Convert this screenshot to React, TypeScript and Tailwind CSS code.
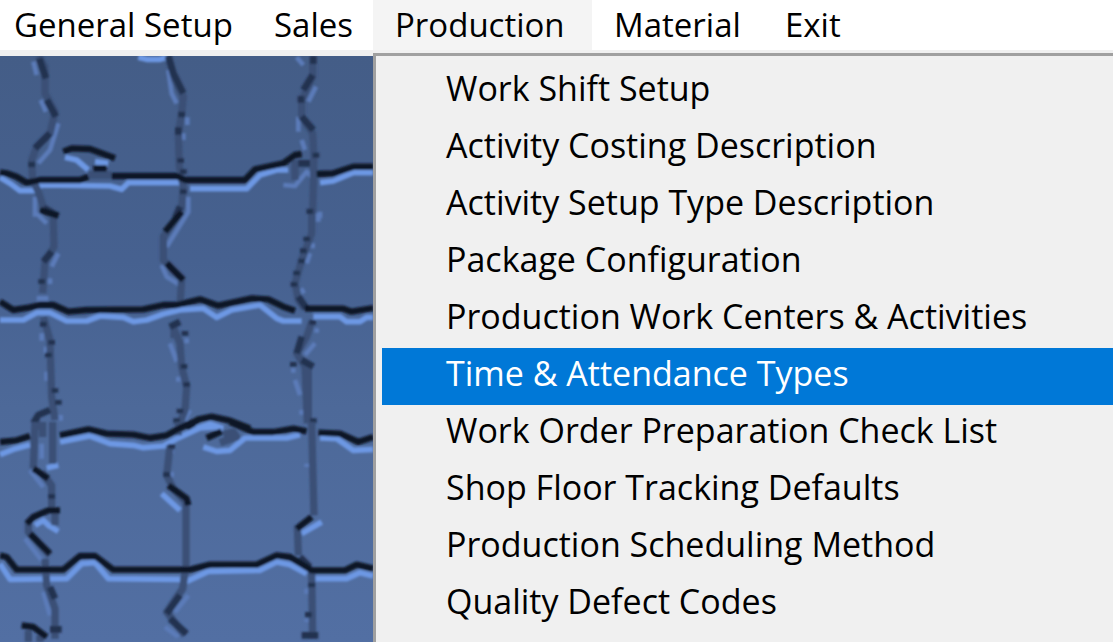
import { useState } from "react";
import clsx from "clsx";

const menus = [
  { label: "General Setup", width: "w-[260px] -ml-2" },
  { label: "Sales", width: "w-[121px]" },
  { label: "Production", width: "w-[219px]" },
  { label: "Material", width: "w-[171px]" },
  { label: "Exit", width: "w-[99px]" },
];

const productionItems = [
  "Work Shift Setup",
  "Activity Costing Description",
  "Activity Setup Type Description",
  "Package Configuration",
  "Production Work Centers & Activities",
  "Time & Attendance Types",
  "Work Order Preparation Check List",
  "Shop Floor Tracking Defaults",
  "Production Scheduling Method",
  "Quality Defect Codes",
];

// each band of the stone wall: joints (soft), knots (darker), shadows and lit edges
const bands = [
  {
    offset: "translate(0 0)",
    joints:
      "M115 168L135 200V280L165 335L150 400L110 440L95 480L98 540L115 575L130 620L160 640 M505 168L525 240L550 290L545 340L535 400L538 500L550 560L545 620L530 650 M938 168V230L905 300V350L938 400L942 470L938 640 M265 525H335 M885 480V540",
    knots:
      "M118 175L138 235 M140 300L168 350 M150 400L105 445 M95 485V502 M130 625L175 648 M505 168L520 220L550 280 M545 335V352 M535 382V404 M542 475V488 M550 508V522 M550 568V582 M540 620L525 655 M940 168V192 M938 225L910 270 M903 288V308 M905 350L940 390 M948 458V473 M895 490H930 M930 626V640",
    shadows:
      "M0 517L20 520L50 530L80 548L120 540H240L265 530 M335 528H530L555 540H735L765 508L850 490L885 465L905 462 M950 522L1000 520L1060 500H1120 M190 455L215 445L270 447L345 475 M280 505H320",
    lights:
      "M0 532L30 550L60 572H100L125 555L330 558L365 568L385 548H540 M570 566H740L780 525L830 510H865 M960 548L1000 543L1060 518H1120 M195 472L230 480L265 510 M285 485L325 490 M415 172L440 178H480L500 172",
    glints:
      "M100 185L110 225 M122 300L138 335 M175 370L150 450L115 490 M105 590V650 M505 210L515 280L530 310 M562 352V375 M550 400V420 M565 590V640 M890 172L910 195 M948 260L925 305 M895 350V395 M905 420L915 450 M850 555L885 558L920 515L935 530 M960 635V655",
  },
  {
    offset: "translate(0 630)",
    joints:
      "M160 20L162 110L135 155L128 250 M130 320L150 390L155 560L165 630 M545 5L490 80V150L545 205L540 290 M515 340L540 400L545 470L560 530L555 600L535 650 M935 0V70L905 150L885 220L895 270L915 296 M935 335L920 380L890 430L915 470L922 640 M925 475V640 M110 630V660 M522 350V385",
    knots:
      "M155 125L130 155 M125 207V222 M130 335V350 M155 390V404 M145 428V442 M165 535V548 M175 570V584 M150 600L115 615L100 640 M540 335L510 350 M555 363V377 M552 462V476 M560 517V530 M540 596V610 M530 625V640 M930 0V12 M920 80V94 M910 115V130 M905 146V160 M890 182V196 M882 216V230 M905 380L890 430 M938 330V344 M905 450L940 470 M880 456V470 M940 625V640 M895 260L920 296",
    shadows:
      "M0 275L40 300L90 292L120 285H160L205 305L260 300L430 298L490 285H530L600 268L655 287L755 265L805 268L850 290L885 302 M915 296H1030L1055 305L1120 294 M120 0L175 18 M545 5L495 65 M500 160L550 210 M560 655L595 628L635 620L690 632L750 655",
    lights:
      "M0 330H70L110 308H150L200 333H260L300 318L370 322L400 335L440 330L490 312L540 300L610 295L650 322L695 300L780 285L830 325L850 333H905 M940 320H1020L1040 335H1080L1100 322H1120 M590 655L630 642L670 655",
    glints:
      "M110 10L140 40 M175 130L155 170 M150 205V222 M110 265H145 M125 370V392 M138 410V430 M140 485V512 M182 615V632 M565 5L500 110 M485 165L500 200L540 225 M510 400L530 455 M560 385V400 M535 500V515 M570 600L555 630 M955 10V35 M938 100V115 M930 130L920 160 M903 235L912 250 M950 355V368 M945 400L915 435 M880 475V488 M885 510L900 555 M905 600V614",
  },
  {
    offset: "translate(0 1266)",
    joints:
      "M105 0L100 140 M158 0V125 M128 0V45 M125 150L155 190V260 M85 300V330L150 400 M135 410L140 490L165 560V650 M510 70L500 160L520 200L558 240V430L548 500L500 570L555 640 M935 0L942 280 M892 310L895 400 M935 445L938 650 M85 625V660 M120 640V660 M165 265V310 M670 38L700 30L710 45L660 62 M535 0V40",
    knots:
      "M155 216V230 M150 495L165 530 M150 622H185 M515 66V80 M500 150V165 M540 520L500 575 M510 590L560 635 M900 405L930 435 M935 482V496 M925 570V586 M905 640H955",
    shadows:
      "M0 60L50 55L90 42 M180 40L265 22L320 35L400 38L450 48L500 40L540 18L595 -6 M690 0L760 30H820L880 20L920 28 M955 32L1020 35L1075 60L1120 45 M620 48L665 28 M100 140L145 170 M180 265H145L100 285L80 305 M90 335L150 395 M65 610L100 615L140 645 M505 190L560 230L565 250 M935 285L890 320 M0 400L20 405L50 443H190L240 402H285L340 443H570L630 428H770L830 400L870 405L935 445H1035L1070 428L1120 440",
    lights:
      "M0 98L40 82L90 68 M180 60L270 42L330 65L400 70L430 77L490 72L530 50L600 18L655 14 M610 75L650 88L690 85L735 48H860L900 38 M960 48L1010 50L1060 85L1120 82 M0 425L30 472L200 470L245 425L285 422L325 470L540 472 M560 478L625 448L780 445L830 420L870 428L920 455 M945 470H1040L1080 452L1120 462 M140 138L175 130 M105 310L130 295L145 310L175 328 M965 300L905 335 M485 215L540 265",
    glints:
      "M125 65V110 M90 145L130 195 M75 350L125 415 M130 510L150 580 M515 85V95 M515 150V165 M565 520L525 570 M495 615L535 645 M920 125V135 M920 500V515 M920 592V600",
  },
];

function StoneWall() {
  return (
    <svg
      viewBox="0 168 1119 1758"
      preserveAspectRatio="xMinYMin slice"
      className="block h-full w-full"
      fill="none"
      aria-hidden="true"
    >
      <defs>
        <linearGradient id="wall" x1="0" y1="0" x2="0" y2="1">
          <stop offset="0" stopColor="#445d87" />
          <stop offset="0.35" stopColor="#466190" />
          <stop offset="0.6" stopColor="#4d6999" />
          <stop offset="1" stopColor="#526fa3" />
        </linearGradient>
        <filter id="soften" filterUnits="userSpaceOnUse" x="-40" y="120" width="1200" height="1860">
          <feGaussianBlur stdDeviation="3" />
        </filter>
      </defs>
      <rect y="168" width="1119" height="1758" fill="url(#wall)" />
      <g filter="url(#soften)">
        {bands.map((b) => (
          <g key={b.offset} transform={b.offset} strokeLinejoin="round">
            <path d={b.glints} stroke="#5b7cb9" strokeWidth="14" />
            <path d={b.lights} stroke="#6d98e4" strokeWidth="17" />
            <path d={b.joints} stroke="#3a4f76" strokeWidth="22" />
            <path d={b.knots} stroke="#22314f" strokeWidth="20" />
            <path d={b.shadows} stroke="#101725" strokeWidth="19" />
          </g>
        ))}
      </g>
    </svg>
  );
}

export default function App() {
  const [open, setOpen] = useState("Production");
  const [active, setActive] = useState("Time & Attendance Types");

  return (
    <div className="flex min-h-screen flex-col overflow-hidden bg-[#f0f0f0] font-['Open_Sans','Noto_Sans',sans-serif] text-black">
      <nav className="flex h-[53px] shrink-0 border-b-3 border-[#f0f0f0] bg-white text-[33px] leading-[50px]">
        {menus.map((m) => (
          <button
            key={m.label}
            type="button"
            onClick={() => setOpen(m.label)}
            className={clsx(
              "shrink-0 whitespace-nowrap pl-[22px] text-left",
              m.width,
              open === m.label && "bg-[#f4f4f4]"
            )}
          >
            {m.label}
          </button>
        ))}
      </nav>
      <div className="flex flex-1">
        <div className="relative mt-[3px] w-[373px] shrink-0">
          <div className="absolute inset-0">
            <StoneWall />
          </div>
        </div>
        <ul
          role="menu"
          className="min-w-0 flex-1 border-t-3 border-l-3 border-[#a0a0a0] pt-[7px] pb-2 pl-1.5 text-[34px] leading-[51px]"
        >
          {productionItems.map((item) => (
            <li key={item} role="none">
              <button
                type="button"
                role="menuitem"
                onMouseEnter={() => setActive(item)}
                className={clsx(
                  "block h-[57px] w-full whitespace-nowrap pb-1.5 pl-16 text-left",
                  active === item && "bg-[#0078d7] text-white"
                )}
              >
                {item}
              </button>
            </li>
          ))}
        </ul>
      </div>
    </div>
  );
}
